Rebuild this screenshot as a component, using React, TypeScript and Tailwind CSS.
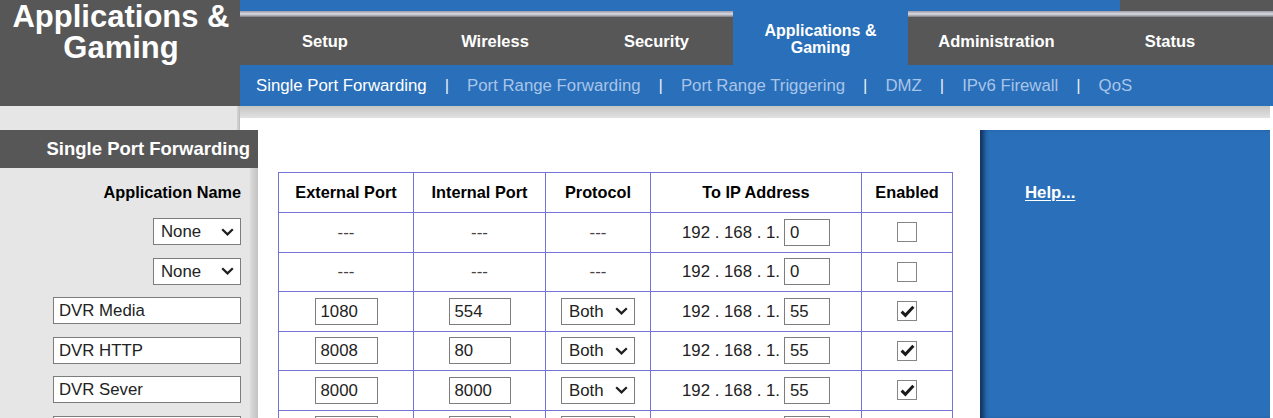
import React from "react";

type Row = {
  name: string;
  preset: boolean;
  ext: string;
  int: string;
  proto: string;
  ip: string;
  enabled: boolean;
};

const rows: Row[] = [
  { name: "None", preset: true, ext: "", int: "", proto: "", ip: "0", enabled: false },
  { name: "None", preset: true, ext: "", int: "", proto: "", ip: "0", enabled: false },
  { name: "DVR Media", preset: false, ext: "1080", int: "554", proto: "Both", ip: "55", enabled: true },
  { name: "DVR HTTP", preset: false, ext: "8008", int: "80", proto: "Both", ip: "55", enabled: true },
  { name: "DVR Sever", preset: false, ext: "8000", int: "8000", proto: "Both", ip: "55", enabled: true },
  { name: "DVR Mobile", preset: false, ext: "8080", int: "8080", proto: "Both", ip: "55", enabled: true },
];

const tabs = [
  { label: "Setup", w: "w-[170px]" },
  { label: "Wireless", w: "w-[170px]" },
  { label: "Security", w: "w-[153px]" },
  { label: "Applications & Gaming", w: "w-[175px]", active: true },
  { label: "Administration", w: "w-[177px]" },
  { label: "Status", w: "w-[170px]" },
];

const subnav = [
  "Single Port Forwarding",
  "Port Range Forwarding",
  "Port Range Triggering",
  "DMZ",
  "IPv6 Firewall",
  "QoS",
];

function Chevron() {
  return (
    <svg width="13" height="8" viewBox="0 0 13 8" className="shrink-0">
      <path d="M1.2 1.2 6.5 6.4 11.8 1.2" fill="none" stroke="#1f1f1f" strokeWidth="2.2" />
    </svg>
  );
}

function FakeSelect({ value, width }: { value: string; width: string }) {
  return (
    <div
      className={`flex items-center justify-between h-[27px] border border-[#7d7d7d] bg-white pl-[7px] pr-[6px] text-[16.8px] text-[#222] ${width}`}
    >
      <span>{value}</span>
      <Chevron />
    </div>
  );
}

function TextBox({ value, width }: { value: string; width: string }) {
  return (
    <div
      className={`flex items-center h-[27px] border border-[#7d7d7d] bg-white pl-[5px] text-[16.8px] text-[#222] ${width}`}
    >
      {value}
    </div>
  );
}

function CheckBox({ checked }: { checked: boolean }) {
  return (
    <div className="w-[20px] h-[20px] border border-[#858585] bg-white flex items-center justify-center">
      {checked && (
        <svg width="15" height="13" viewBox="0 0 15 13">
          <path d="M1.6 6.6 5.4 10.3 13.4 1.8" fill="none" stroke="#1a1a1a" strokeWidth="3" />
        </svg>
      )}
    </div>
  );
}

const cell = "flex items-center justify-center border-r border-b border-[#7474d8]";

export default function App() {
  return (
    <div className="w-[1273px] h-[418px] overflow-hidden bg-white font-['Liberation_Sans',Arial,sans-serif]">
      {/* Header */}
      <div className="flex h-[106px]">
        <div className="w-[240px] bg-[#575757] text-white font-bold text-[31px] leading-[31px] text-center pl-[2px] pt-[1px]">
          Applications &amp;
          <br />
          Gaming
        </div>
        <div className="flex-1 flex flex-col">
          <div className="flex h-[11px]">
            <div className="w-[880px] bg-[#2a6fb9]" />
            <div className="flex-1 bg-[#575757]" />
          </div>
          <div className="flex h-[54px]">
            {tabs.map((t) =>
              t.active ? (
                <div
                  key={t.label}
                  className={`${t.w} bg-[#2a6fb9] flex items-center justify-center text-center text-white font-bold text-[16px] leading-[17px] pt-[2px]`}
                >
                  Applications &amp;
                  <br />
                  Gaming
                </div>
              ) : (
                <div key={t.label} className={`${t.w} flex flex-col bg-[#575757]`}>
                  <div className="h-[6px] bg-gradient-to-b from-[#9a9aa8] via-[#dcdce6] to-[#7a7a80]" />
                  <div className="flex-1 flex items-center justify-center text-white font-bold text-[16.5px]">
                    {t.label}
                  </div>
                </div>
              )
            )}
            <div className="flex-1 flex flex-col bg-[#575757]">
              <div className="h-[6px] bg-gradient-to-b from-[#9a9aa8] via-[#dcdce6] to-[#7a7a80]" />
            </div>
          </div>
          <div className="flex items-center h-[41px] bg-[#2a6fb9] pl-[16px] text-[16.8px]">
            {subnav.map((s, i) => (
              <React.Fragment key={s}>
                {i > 0 && <span className="mx-[18px] text-[#e6eef8]">|</span>}
                <span className={i === 0 ? "text-white" : "text-[#a8c5e9]"}>{s}</span>
              </React.Fragment>
            ))}
          </div>
        </div>
      </div>

      {/* Strip under header */}
      <div className="flex h-[24px]">
        <div className="w-[240px] flex bg-[#e6e6e6]">
          <div className="flex-1" />
          <div className="w-[3px] bg-gradient-to-r from-[#d6d6d6] to-[#bdbdbd]" />
        </div>
        <div className="w-[1030px] flex flex-col">
          <div className="h-[12px] bg-gradient-to-b from-[#c4c4c4] to-[#e2e2e2]" />
        </div>
      </div>

      {/* Body */}
      <div className="flex h-[288px]">
        {/* Left labels */}
        <div className="w-[258px] flex flex-col">
          <div className="h-[38px] shrink-0 bg-[#575757] flex items-center justify-end pr-[8px] text-white font-bold text-[18.5px]">
            Single Port Forwarding
          </div>
          <div className="flex-1 flex">
            <div className="w-[250px] bg-[#e6e6e6] flex flex-col pt-[4px] pr-[9px]">
              <div className="h-[40px] shrink-0 flex items-center justify-end font-bold text-[16.3px] text-black">
                Application Name
              </div>
              {rows.map((r, i) => (
                <div key={i} className="h-[39.5px] shrink-0 flex items-center justify-end">
                  {r.preset ? (
                    <FakeSelect value={r.name} width="w-[88px]" />
                  ) : (
                    <TextBox value={r.name} width="w-[188px]" />
                  )}
                </div>
              ))}
            </div>
            <div className="w-[8px] bg-gradient-to-r from-[#dcdcdc] to-[#c2c2c2]" />
          </div>
        </div>

        {/* Table */}
        <div className="w-[722px] pl-[20px] pt-[42px]">
          <div className="grid grid-cols-[135px_132px_105px_211px_91px] w-[675px] border-l border-t border-[#7474d8] text-[16.8px] text-[#222]">
            {["External Port", "Internal Port", "Protocol", "To IP Address", "Enabled"].map((h) => (
              <div key={h} className={`${cell} h-[40px] font-bold text-[16.3px] text-black`}>
                {h}
              </div>
            ))}
            {rows.map((r, i) => (
              <React.Fragment key={i}>
                <div className={`${cell} h-[39.5px]`}>
                  {r.preset ? <span className="text-[#444]">---</span> : <TextBox value={r.ext} width="w-[63px]" />}
                </div>
                <div className={`${cell} h-[39.5px]`}>
                  {r.preset ? <span className="text-[#444]">---</span> : <TextBox value={r.int} width="w-[62px]" />}
                </div>
                <div className={`${cell} h-[39.5px]`}>
                  {r.preset ? <span className="text-[#444]">---</span> : <FakeSelect value={r.proto} width="w-[74px]" />}
                </div>
                <div className={`${cell} h-[39.5px]`}>
                  <span className="whitespace-pre">192 . 168 . 1.</span>
                  <div className="ml-[4px]">
                    <TextBox value={r.ip} width="w-[46px]" />
                  </div>
                </div>
                <div className={`${cell} h-[39.5px]`}>
                  <CheckBox checked={r.enabled} />
                </div>
              </React.Fragment>
            ))}
          </div>
        </div>

        {/* Help panel */}
        <div className="w-[290px] bg-[#2a6fb9] shadow-[inset_7px_0_5px_-3px_rgba(10,30,60,0.75)] pl-[45px] pt-[50px]">
          <a className="text-white font-bold text-[16.8px] underline underline-offset-2">Help...</a>
        </div>
      </div>
    </div>
  );
}
